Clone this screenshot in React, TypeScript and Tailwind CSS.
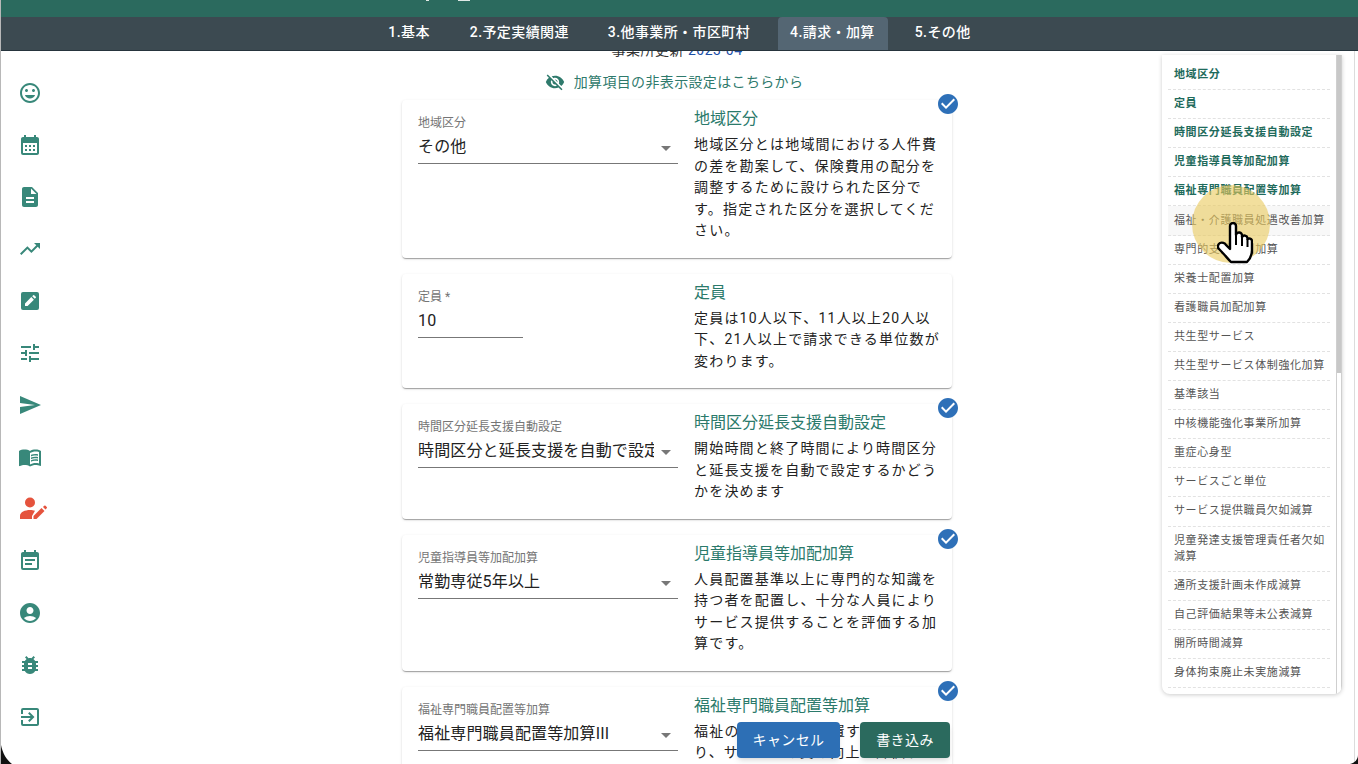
import type { ReactNode } from 'react'
import {
  MdAccountCircle,
  MdArrowDropDown,
  MdBugReport,
  MdCalendarMonth,
  MdCheckCircle,
  MdDescription,
  MdEventNote,
  MdExitToApp,
  MdInsertEmoticon,
  MdMenuBook,
  MdSend,
  MdTrendingUp,
  MdTune,
  MdVisibilityOff,
} from 'react-icons/md'

const tabs = [
  { label: '1.基本', className: 'ml-0' },
  { label: '2.予定実績関連', className: 'ml-[40px]' },
  { label: '3.他事業所・市区町村', className: 'ml-[39px]' },
  { label: '4.請求・加算', className: 'ml-[28px] bg-[#546673] rounded-t-[4px] pl-[12px] pr-[13px]' },
  { label: '5.その他', className: 'ml-[27px]' },
]

const navItems = [
  '地域区分',
  '定員',
  '時間区分延長支援自動設定',
  '児童指導員等加配加算',
  '福祉専門職員配置等加算',
  '福祉・介護職員処遇改善加算',
  '専門的支援体制加算',
  '栄養士配置加算',
  '看護職員加配加算',
  '共生型サービス',
  '共生型サービス体制強化加算',
  '基準該当',
  '中核機能強化事業所加算',
  '重症心身型',
  'サービスごと単位',
  'サービス提供職員欠如減算',
  '児童発達支援管理責任者欠如減算',
  '通所支援計画未作成減算',
  '自己評価結果等未公表減算',
  '開所時間減算',
  '身体拘束廃止未実施減算',
]

function EditBox() {
  return (
    <svg viewBox="0 0 24 24" className="h-6 w-6">
      <path fill="#38887a" d="M3 5a2 2 0 0 1 2-2h14a2 2 0 0 1 2 2v14a2 2 0 0 1-2 2H5a2 2 0 0 1-2-2z" />
      <path fill="#fff" d="M7 17v-2.6l6.3-6.3 2.6 2.6L9.6 17zM14.2 7.2l1-1a.7.7 0 0 1 1 0l1.6 1.6a.7.7 0 0 1 0 1l-1 1z" />
    </svg>
  )
}

function PersonEdit() {
  return (
    <svg viewBox="0 0 36 24" className="h-6 w-9" fill="#e5533d">
      <circle cx="18" cy="5.500" r="5" />
      <path d="M8 22v-3c0-4 5-6 10-6 2 0 3.500.3 5 .8L20 19v3z" />
      <path d="M21.500 22v-3l8-8 3 3-8 8zM31 10l1.200-1.200a1 1 0 0 1 1.400 0l1.100 1.100a1 1 0 0 1 0 1.400L33.500 12.500z" />
    </svg>
  )
}

const sideIcons: ReactNode[] = [
  <MdInsertEmoticon key="mood" className="h-6 w-6 text-[#38887a]" />,
  <MdCalendarMonth key="calendar" className="h-6 w-6 text-[#38887a]" />,
  <MdDescription key="doc" className="h-6 w-6 text-[#38887a]" />,
  <MdTrendingUp key="trend" className="h-6 w-6 text-[#38887a]" />,
  <EditBox key="edit" />,
  <MdTune key="tune" className="h-6 w-6 text-[#38887a]" />,
  <MdSend key="send" className="h-6 w-6 text-[#38887a]" />,
  <MdMenuBook key="book" className="h-6 w-6 text-[#38887a]" />,
  <PersonEdit key="person" />,
  <MdEventNote key="event" className="h-6 w-6 text-[#38887a]" />,
  <MdAccountCircle key="account" className="h-6 w-6 text-[#38887a]" />,
  <MdBugReport key="bug" className="h-6 w-6 text-[#38887a]" />,
  <MdExitToApp key="exit" className="h-6 w-6 text-[#38887a]" />,
]

function Field({
  label,
  value,
  select = true,
}: {
  label: string
  value: string
  select?: boolean
}) {
  return (
    <div className={select ? 'ml-4 mt-[7px] w-[260px] shrink-0' : 'ml-4 mt-[6px] w-[260px] shrink-0'}>
      <div className={select ? 'h-4 text-xs leading-4 text-[#757575]' : 'mt-px h-4 text-xs leading-4 text-[#757575]'}>
        {label}
      </div>
      <div
        className={
          select
            ? 'relative mt-1 h-[29px] border-b border-[#777] pr-6'
            : 'mt-1 h-[29px] w-[105px] border-b border-[#777]'
        }
      >
        <div className="h-6 overflow-hidden whitespace-nowrap text-base leading-6 tracking-[0.15px] text-[#222]">
          {value}
        </div>
        {select && (
          <MdArrowDropDown className="absolute right-0 top-[1px] h-6 w-6 text-[#777]" />
        )}
      </div>
    </div>
  )
}

function Card({
  label,
  value,
  title,
  checked = true,
  select = true,
  children,
}: {
  label: string
  value: string
  title: string
  checked?: boolean
  select?: boolean
  children: ReactNode
}) {
  return (
    <section className="relative flex shrink-0 rounded-[4px] bg-white pb-[16px] pt-[8px] shadow-[0_2px_1px_-1px_rgba(0,0,0,0.2),0_1px_1px_0_rgba(0,0,0,0.14),0_1px_3px_0_rgba(0,0,0,0.12)]">
      <Field label={label} value={value} select={select} />
      <div className="ml-4 w-[247px]">
        <h2 className="text-base font-normal leading-[22px] text-[#2b7a6b]">{title}</h2>
        <p className="mt-1 text-sm leading-[21.5px] tracking-[1.2px] text-[#222]">{children}</p>
      </div>
      {checked && (
        <span className="absolute -right-2 -top-2 rounded-full">
          <MdCheckCircle className="h-6 w-6 text-[#2e70b8]" />
          <span className="absolute left-[7px] top-[7px] -z-10 h-[10px] w-[10px] bg-white" />
        </span>
      )}
    </section>
  )
}

export default function App() {
  return (
    <div
      className="relative flex h-[764px] w-[1358px] flex-col overflow-hidden border-l border-[#b8b8b8] bg-white"
      style={{ fontFamily: 'Roboto, "Noto Sans CJK JP", sans-serif' }}
    >
      <div className="flex h-[17px] shrink-0 items-start bg-[#2b6a5e] pl-[425px]">
        <span className="h-px w-[3px] bg-[#dfe9e6]" />
        <span className="ml-[29px] h-px w-[12px] bg-[#dfe9e6]" />
      </div>

      <nav className="relative z-10 flex h-[34px] shrink-0 items-stretch justify-center border-b border-[#26343d] bg-[#3c4a51]">
        {tabs.map((tab) => (
          <div
            key={tab.label}
            className={`flex items-center whitespace-nowrap pb-[4px] text-sm font-medium tracking-[0.4px] text-white ${tab.className}`}
          >
            {tab.label}
          </div>
        ))}
      </nav>

      <div className="flex min-h-0 flex-1">
        <aside className="flex w-[58px] shrink-0 flex-col items-center gap-7 pt-[30px]">
          {sideIcons}
        </aside>

        <main className="min-w-0 flex-1 overflow-hidden pl-[343px]">
          <div className="w-[550px]">
            <div className="-mt-[11px] h-5 text-center text-sm leading-5 tracking-[0.5px] text-[#333]">
              事業所更新 <span className="text-[#1d4fa8]">2023-04</span>
            </div>
            <div className="mt-[12px] flex h-5 items-center justify-center gap-[9px] pr-[6px] text-sm tracking-[0.35px] text-[#2f7a6c]">
              <MdVisibilityOff className="h-5 w-5" />
              加算項目の非表示設定はこちらから
            </div>
            <div className="mt-[8px] flex flex-col gap-4">
              <Card label="地域区分" value="その他" title="地域区分">
                地域区分とは地域間における人件費の差を勘案して、保険費用の配分を調整するために設けられた区分です。指定された区分を選択してください。
              </Card>
              <Card label="定員 *" value="10" title="定員" checked={false} select={false}>
                定員は10人以下、11人以上20人以下、21人以上で請求できる単位数が変わります。
              </Card>
              <Card label="時間区分延長支援自動設定" value="時間区分と延長支援を自動で設定する" title="時間区分延長支援自動設定">
                開始時間と終了時間により時間区分と延長支援を自動で設定するかどうかを決めます
              </Card>
              <Card label="児童指導員等加配加算" value="常勤専従5年以上" title="児童指導員等加配加算">
                人員配置基準以上に専門的な知識を持つ者を配置し、十分な人員によりサービス提供することを評価する加算です。
              </Card>
              <Card label="福祉専門職員配置等加算" value="福祉専門職員配置等加算III" title="福祉専門職員配置等加算">
                福祉の専門職員を配置することにより、サービスの質の向上を評価する加算です。
              </Card>
            </div>
          </div>
        </main>

        <div className="relative mt-1 flex h-[639px] w-[180px] shrink-0 overflow-hidden rounded-b-lg bg-white shadow-[0_1px_4px_rgba(0,0,0,0.2)]">
          <ul className="w-[174px] px-[6px] pt-[6px]">
            {navItems.map((item, index) => (
              <li
                key={item}
                className={`border-b border-dashed border-[#e2e2e2] py-[6.05px] pl-[6px] pr-[4px] text-[11px] leading-4 tracking-[0.6px] ${
                  index < 5 ? 'font-bold text-[#1f6b5c]' : 'text-[#555]'
                } ${index === 5 ? 'bg-[#f8f8f8]' : ''}`}
              >
                {item}
              </li>
            ))}
          </ul>
          <div className="w-[6px] border-x border-[#cfcfcf]">
            <div className="h-[318px] bg-[#c8c8c8]" />
          </div>
        </div>
        <div className="ml-3 w-px shrink-0 bg-[#dcdcdc]" />
        <div className="w-[3px] shrink-0" />
      </div>

      <div className="absolute left-[736px] top-[722px] flex gap-5">
        <button className="h-9 w-[103px] rounded-[4px] bg-[#2d6fb5] text-sm tracking-[0.4px] text-white shadow-md">
          キャンセル
        </button>
        <button className="h-9 w-[90px] rounded-[4px] bg-[#2b6a5e] text-sm tracking-[0.4px] text-white shadow-md">
          書き込み
        </button>
      </div>

      <div className="absolute left-[1191px] top-[185px] z-20 h-[78px] w-[78px] rounded-full bg-[#e9c95c]/60" />
      <svg viewBox="0 0 36 42" className="absolute left-[1216px] top-[222px] z-30 h-[42px] w-[36px]">
        <path
          fill="#fff"
          stroke="#000"
          strokeWidth="2.4"
          strokeLinejoin="round"
          d="M13 4a3 3 0 0 1 6 0v9a3 3 0 0 1 6 1v1a3 3 0 0 1 5.500 1v1a3 3 0 0 1 4.500 1.500V28c0 6-3 10-5 12H14c-3-3-7-8-12-13-2-2-1-5 1-6 2-1 5 0 6 2l4 4z"
        />
        <path stroke="#000" strokeWidth="2" d="M19 14v9M25 15v9M30.500 17v8" />
      </svg>

      <svg viewBox="0 0 12 30" className="absolute -left-px bottom-0 z-40 h-[30px] w-3">
        <path fill="#111" d="M0 0c0 14 4 24 12 30H0z" />
      </svg>
      <svg viewBox="0 0 8 9" className="absolute bottom-0 right-0 z-40 h-[9px] w-2">
        <path fill="#111" d="M8 0c0 4-3 8-8 9h8z" />
      </svg>
    </div>
  )
}
